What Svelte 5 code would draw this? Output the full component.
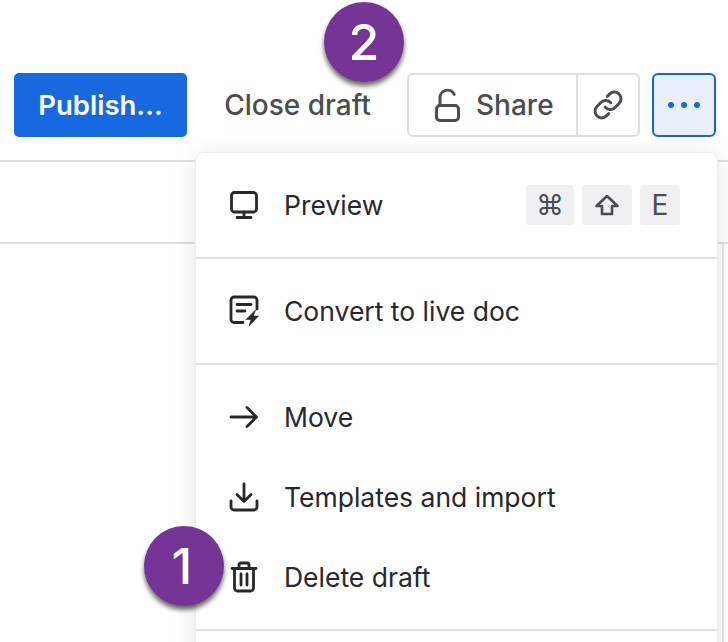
<script>
	const shortcuts = [
		{ key: '⌘', width: 48 },
		{ key: 'shift', width: 50 },
		{ key: 'E', width: 40 }
	]
</script>

<main class="page">
	<header class="toolbar">
		<button class="publish">Publish...</button>
		<button class="close">Close draft</button>
		<div class="share-group">
			<button class="share">
				<svg width="30" height="34" viewBox="0 0 30 34" fill="none" stroke="#4a4d52" stroke-width="3" stroke-linecap="round" stroke-linejoin="round">
					<rect x="3.5" y="17.5" width="22" height="15" rx="3.5" />
					<path d="M7 17V9.5a7.5 7.5 0 0 1 14.2-3.2" />
				</svg>
				<span>Share</span>
			</button>
			<button class="link" aria-label="Copy link">
				<svg width="34" height="34" viewBox="0 0 24 24" fill="none" stroke="#4a4d52" stroke-width="2.1" stroke-linecap="round" stroke-linejoin="round">
					<path d="M10 13.5a4.6 4.6 0 0 0 6.8.4l3-3a4.7 4.7 0 0 0-6.7-6.6l-1.6 1.6" />
					<path d="M14 10.5a4.6 4.6 0 0 0-6.8-.4l-3 3a4.7 4.7 0 0 0 6.7 6.6l1.6-1.6" />
				</svg>
			</button>
		</div>
		<button class="more" aria-label="More">
			<i></i><i></i><i></i>
		</button>
	</header>
	<div class="subbar"><b></b></div>
	<div class="rail"></div>

	<nav class="menu">
		<section>
			<div class="item">
				<svg width="30" height="30" viewBox="0 0 30 30" fill="none" stroke="#26282c" stroke-width="2.8" stroke-linecap="round" stroke-linejoin="round">
					<rect x="2.5" y="2.5" width="25" height="19.5" rx="3" />
					<path d="M15 22v5M8 27.5h14" />
				</svg>
				<span>Preview</span>
				<div class="keys">
					{#each shortcuts as s}
						<kbd style="width: {s.width}px">
							{#if s.key === 'shift'}
								<svg width="26" height="24" viewBox="0 0 26 24" fill="none" stroke="#4a4d52" stroke-width="2.6" stroke-linejoin="round">
									<path d="M13 3 2.5 13H8v8h10v-8h5.500z" />
								</svg>
							{:else}
								{s.key}
							{/if}
						</kbd>
					{/each}
				</div>
			</div>
		</section>
		<section>
			<div class="item">
				<svg width="30" height="32" viewBox="0 0 30 32" fill="none" stroke="#26282c" stroke-width="2.8" stroke-linecap="round" stroke-linejoin="round">
					<path d="M14 27.500H5a3 3 0 0 1-3-3V5a3 3 0 0 1 3-3h20a3 3 0 0 1 3 3v9" />
					<path d="M8 9.500h14M8 16h8" />
					<path d="M26.500 15 17 24.500h5l-2 6.500 9.500-10h-5z" fill="#26282c" stroke="#26282c" stroke-width="0.6" />
				</svg>
				<span>Convert to live doc</span>
			</div>
		</section>
		<section>
			<div class="item">
				<svg width="30" height="30" viewBox="0 0 30 30" fill="none" stroke="#26282c" stroke-width="2.8" stroke-linecap="round" stroke-linejoin="round">
					<path d="M2 15h25M18 5.500l9.500 9.500-9.500 9.500" />
				</svg>
				<span>Move</span>
			</div>
			<div class="item">
				<svg width="30" height="30" viewBox="0 0 30 30" fill="none" stroke="#26282c" stroke-width="2.8" stroke-linecap="round" stroke-linejoin="round">
					<path d="M15 2v17M8 12.500l7 7 7-7" />
					<path d="M2 19v6a3 3 0 0 0 3 3h20a3 3 0 0 0 3-3v-6" />
				</svg>
				<span>Templates and import</span>
			</div>
			<div class="item">
				<svg width="30" height="32" viewBox="0 0 30 32" fill="none" stroke="#26282c" stroke-width="2.8" stroke-linecap="round" stroke-linejoin="round">
					<path d="M3 7.500h24M10 7V4a2 2 0 0 1 2-2h6a2 2 0 0 1 2 2v3" />
					<path d="M5.500 8v19a3 3 0 0 0 3 3h13a3 3 0 0 0 3-3V8" />
					<path d="M12 13v11M18 13v11" />
				</svg>
				<span>Delete draft</span>
			</div>
		</section>
		<section></section>
	</nav>

	<div class="badge two">2</div>
	<div class="badge one">1</div>
</main>

<style>
	:global(body) {
		margin: 0;
		background: #fff;
	}
	.page {
		position: relative;
		width: 728px;
		height: 642px;
		overflow: hidden;
		font-family: Inter, "Liberation Sans", sans-serif;
		color: #26282c;
	}
	button {
		font-family: inherit;
		cursor: pointer;
		padding: 0;
	}
	.toolbar {
		display: flex;
		align-items: center;
		box-sizing: border-box;
		height: 162px;
		padding: 73px 0 23px 14px;
		border-bottom: 2px solid #dfdfe1;
	}
	.publish {
		width: 173px;
		height: 64px;
		background: #1769e0;
		color: #fff;
		border: none;
		border-radius: 5px;
		font-size: 27.500px;
		font-weight: 600;
	}
	.close {
		width: 147px;
		margin-left: 37px;
		background: none;
		border: none;
		color: #4a4d52;
		font-size: 28px;
		font-weight: 500;
		white-space: nowrap;
	}
	.share-group {
		display: flex;
		margin-left: 36px;
		width: 233px;
		height: 64px;
		box-sizing: border-box;
		border: 2px solid #dfdfe1;
		border-radius: 6px;
	}
	.share {
		display: flex;
		align-items: center;
		gap: 13px;
		width: 169px;
		padding-left: 24px;
		background: none;
		border: none;
		border-right: 2px solid #dfdfe1;
		color: #4a4d52;
		font-size: 28px;
		font-weight: 500;
	}
	.link {
		display: grid;
		place-items: center;
		flex: 1;
		background: none;
		border: none;
	}
	.more {
		display: flex;
		align-items: center;
		justify-content: center;
		gap: 7px;
		margin-left: 12px;
		width: 64px;
		height: 64px;
		background: #e8f0fc;
		border: 2px solid #1a64cf;
		border-radius: 6px;
	}
	.more i {
		width: 6px;
		height: 6px;
		border-radius: 50%;
		background: #1769e0;
	}
	.subbar {
		display: flex;
		justify-content: flex-end;
		align-items: center;
		height: 80px;
		padding-right: 10px;
		border-bottom: 2px solid #dfdfe1;
	}
	.subbar b {
		width: 3px;
		height: 3px;
		margin-top: 1px;
		border-radius: 50%;
		background: #4a4d52;
	}
	.rail {
		position: absolute;
		right: 4px;
		top: 244px;
		bottom: 0;
		border-left: 2px solid #e6e6e8;
	}
	.menu {
		position: absolute;
		left: 196px;
		top: 153px;
		width: 521px;
		background: #fff;
		border-radius: 8px;
		box-shadow: 0 0 0 1px #ececee, 0 4px 24px rgba(0, 0, 0, 0.12);
	}
	section {
		padding: 12px 0;
		border-bottom: 2px solid #dfdfe1;
	}
	section:last-child {
		border-bottom: none;
		height: 40px;
	}
	.item {
		display: flex;
		align-items: center;
		gap: 25px;
		height: 80px;
		padding: 0 37px 0 33px;
		font-size: 26.500px;
	}
	.keys {
		display: flex;
		gap: 8px;
		margin-left: auto;
	}
	kbd {
		display: grid;
		place-items: center;
		height: 40px;
		background: #f0f0f2;
		border-radius: 4px;
		font-family: inherit;
		font-size: 28px;
		color: #4a4d52;
	}
	.badge {
		position: absolute;
		display: grid;
		place-items: center;
		box-sizing: border-box;
		width: 80px;
		height: 80px;
		border-radius: 50%;
		background: #763497;
		color: #fff;
		font-size: 50px;
		font-weight: 500;
		box-shadow: 0 4px 5px rgba(0, 0, 0, 0.6);
	}
	.two {
		left: 324px;
		top: 2px;
	}
	.one {
		left: 144px;
		top: 526px;
		padding-right: 4px;
	}
</style>
